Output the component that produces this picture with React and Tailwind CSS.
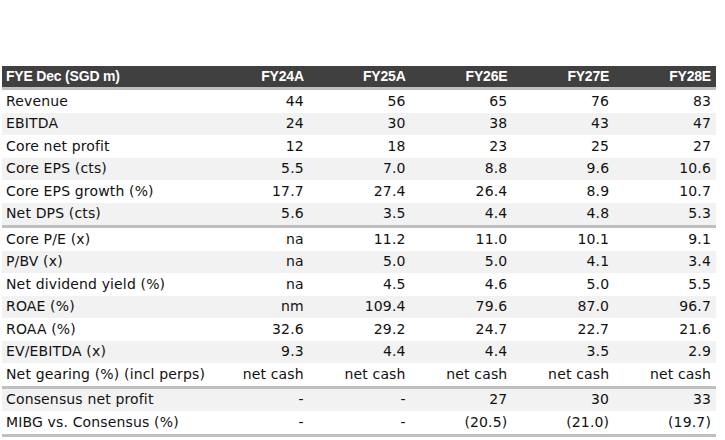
const cols = ["FY24A", "FY25A", "FY26E", "FY27E", "FY28E"];

// rows split into sections; a thick grey rule closes each section
const sections = [
  [
    ["Revenue", "44", "56", "65", "76", "83"],
    ["EBITDA", "24", "30", "38", "43", "47"],
    ["Core net profit", "12", "18", "23", "25", "27"],
    ["Core EPS (cts)", "5.5", "7.0", "8.8", "9.6", "10.6"],
    ["Core EPS growth (%)", "17.7", "27.4", "26.4", "8.9", "10.7"],
    ["Net DPS (cts)", "5.6", "3.5", "4.4", "4.8", "5.3"],
  ],
  [
    ["Core P/E (x)", "na", "11.2", "11.0", "10.1", "9.1"],
    ["P/BV (x)", "na", "5.0", "5.0", "4.1", "3.4"],
    ["Net dividend yield (%)", "na", "4.5", "4.6", "5.0", "5.5"],
    ["ROAE (%)", "nm", "109.4", "79.6", "87.0", "96.7"],
    ["ROAA (%)", "32.6", "29.2", "24.7", "22.7", "21.6"],
    ["EV/EBITDA (x)", "9.3", "4.4", "4.4", "3.5", "2.9"],
    ["Net gearing (%) (incl perps)", "net cash", "net cash", "net cash", "net cash", "net cash"],
  ],
  [
    ["Consensus net profit", "-", "-", "27", "30", "33"],
    ["MIBG vs. Consensus (%)", "-", "-", "(20.5)", "(21.0)", "(19.7)"],
  ],
];

const grid = "grid grid-cols-[205px_repeat(5,1fr)]";

export default function App() {
  let idx = 0;
  return (
    <div
      className="w-[725px] h-[440px] bg-white pt-[66px] pl-[2px] pr-[9px] text-[14px] tracking-[0.15px] text-[#111]"
      style={{ fontFamily: '"DejaVu Sans", Verdana, sans-serif' }}
    >
      <div
        className={`${grid} h-[21px] items-center bg-[#404040] text-white font-bold text-[14px] tracking-[-0.2px] border-b-[3px] border-[#bfbfbf] box-content`}
        style={{ fontFamily: '"Liberation Sans", Arial, sans-serif' }}
      >
        <div className="pl-[4px]">FYE Dec (SGD m)</div>
        {cols.map((c) => (
          <div key={c} className="text-right pr-[5px]">{c}</div>
        ))}
      </div>
      {sections.map((rows, si) => (
        <div key={si} className="border-b-[3px] border-[#bfbfbf]">
          {rows.map((r) => {
            const shade = idx++ % 2 === 1;
            return (
              <div key={r[0]} className={`${grid} h-[22.5px] items-center ${shade ? "bg-[#f2f2f2]" : "bg-white"}`}>
                <div className="pl-[4px] whitespace-nowrap">{r[0]}</div>
                {r.slice(1).map((v, i) => (
                  <div key={i} className="text-right pr-[5px] whitespace-nowrap">{v}</div>
                ))}
              </div>
            );
          })}
        </div>
      ))}
    </div>
  );
}
